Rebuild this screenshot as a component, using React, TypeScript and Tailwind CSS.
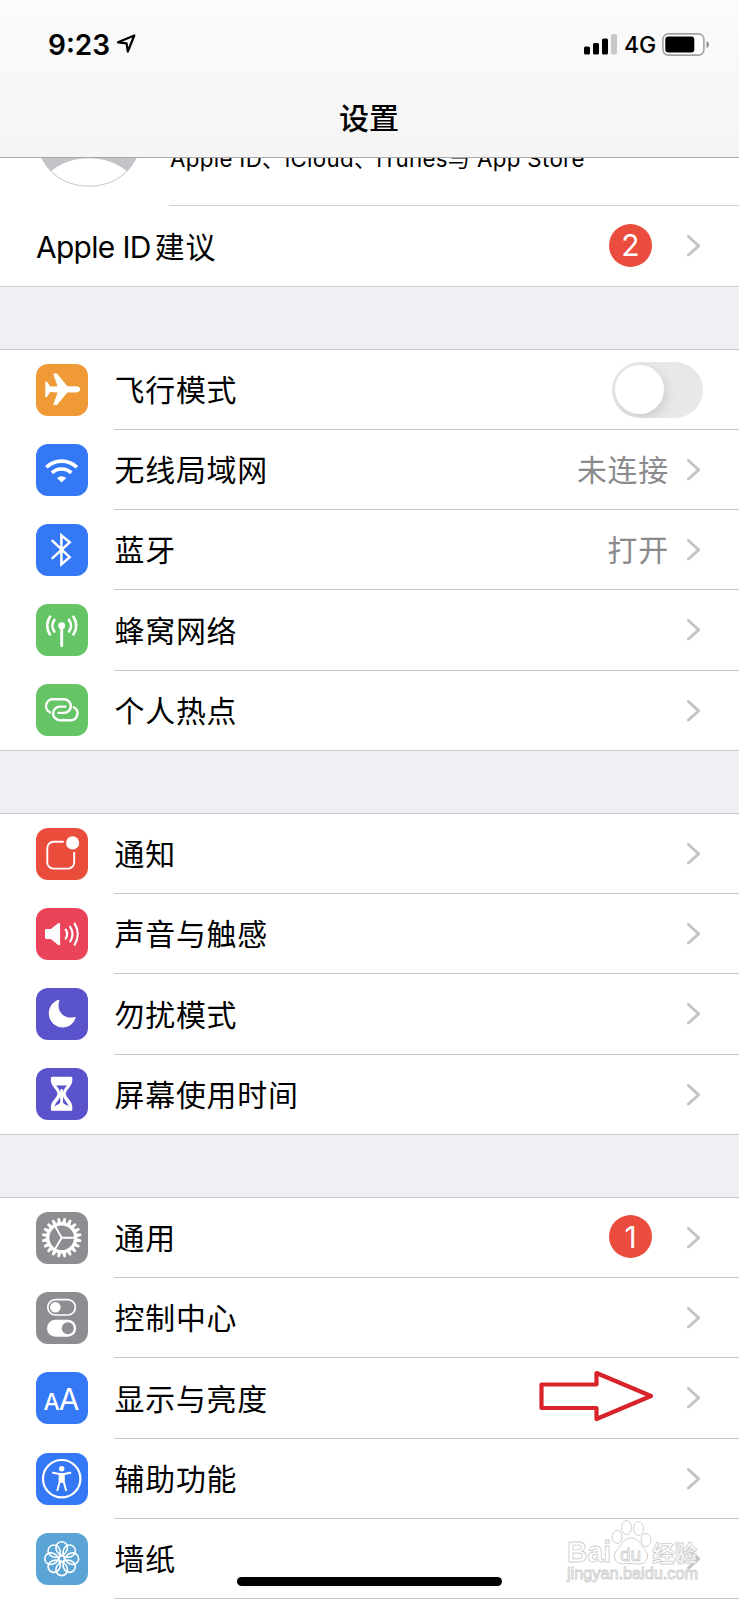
import type { ReactNode } from "react";

const svg = "h-[52px] w-[52px]";

function Glyph({ children }: { children: ReactNode }) {
  return (
    <svg viewBox="0 0 52 52" className={svg} fill="none" stroke="white" strokeLinecap="round" strokeLinejoin="round">
      {children}
    </svg>
  );
}

const Plane = () => (
  <Glyph>
    <path
      d="M44.300 25.300c0-1.900-2-3.100-4.600-3.100H31.300L21.600 10.300c-.5-.6-1-.8-1.700-.8h-1.600c-.7 0-1.100.5-.8 1.200L21.600 22.200l-7.400.4-3-4.600c-.3-.5-.6-.6-1-.6-.6 0-.9.3-.9.8v14.200c0 .5.300.8.9.8.4 0 .7-.1 1-.6l3-4.600 7.400.4-4.100 11.500c-.3.7.1 1.200.8 1.200h1.600c.7 0 1.200-.2 1.700-.8L31.300 28.400h8.400c2.600 0 4.600-1.200 4.600-3.100z"
      fill="white"
      stroke="none"
    />
  </Glyph>
);

const Wifi = () => (
  <Glyph>
    <g strokeWidth="3.600" strokeLinecap="butt">
      <path d="M10.300 23.300a22 22 0 0 1 30.600 0" />
      <path d="M15.900 28.900a14 14 0 0 1 19.400 0" />
    </g>
    <path d="M21 34a6.600 6.600 0 0 1 9.200 0l-4.600 4.500z" fill="white" stroke="none" />
  </Glyph>
);

const Bluetooth = () => (
  <Glyph>
    <path d="M16.500 16.800l17.200 16.400-8.300 7V11.400l8.300 7-17.200 15.800" strokeWidth="2.500" strokeLinejoin="miter" />
  </Glyph>
);

const Antenna = () => (
  <Glyph>
    <circle cx="25.700" cy="21.700" r="3.400" fill="white" stroke="none" />
    <path d="M25.700 22v19.800" strokeWidth="2.900" />
    <g strokeWidth="2.600">
      <path d="M18.400 15.900a9.500 9.500 0 0 0 0 11.600M33 15.900a9.500 9.500 0 0 1 0 11.600" />
      <path d="M14 12.700a15.500 15.500 0 0 0 0 17.800M37.400 12.700a15.500 15.500 0 0 1 0 17.800" />
    </g>
  </Glyph>
);

const Link = () => (
  <Glyph>
    <g strokeWidth="2.400">
      <path d="M14 28.400A6.900 6.900 0 0 1 17.600 15.300H28.100a6.800 6.800 0 0 1 0 13.600H22.600" />
      <path d="M37.800 23.200A6.900 6.900 0 0 1 34.300 36.200H23.900a6.800 6.800 0 0 1 0-13.600H29.400" />
    </g>
  </Glyph>
);

const Notify = () => (
  <Glyph>
    <path d="M27 13.800H17.500a6.200 6.200 0 0 0-6.200 6.200V34.400a6.200 6.200 0 0 0 6.200 6.200H32a6.200 6.200 0 0 0 6.200-6.200V24.800" strokeWidth="1.900" />
    <circle cx="36.600" cy="14.900" r="6.600" fill="white" stroke="none" />
  </Glyph>
);

const Sound = () => (
  <Glyph>
    <path d="M9 22.600c0-.9.600-1.500 1.500-1.500h4.300l7.400-5.800c1-.8 1.900-.3 1.900.7v20.200c0 1-.9 1.500-1.900.7l-7.400-6h-4.300c-.9 0-1.500-.6-1.500-1.500z" fill="white" stroke="none" />
    <g strokeWidth="2.200">
      <path d="M29.700 21.700a8 8 0 0 1 0 8.800M34.200 18.800a13.500 13.500 0 0 1 0 14.600M38.700 15.600a20 20 0 0 1 0 21" />
    </g>
  </Glyph>
);

const Moon = () => (
  <Glyph>
    <path d="M22.400 11.800c.8-.3 1.200.1.900.9-1.300 3.600-1.100 8.900 1.900 12.500 3.100 3.900 8.400 5.200 13.200 3.800 1.100-.3 1.600.2 1.200 1.100C37.500 35.900 32.700 39.500 27 39.500c-7.900 0-14.200-6.300-14.200-14.200 0-6 3.700-11.300 9.600-13.500z" fill="white" stroke="none" />
  </Glyph>
);

const Hourglass = () => (
  <Glyph>
    <path d="M16.300 9.400h18.600c.6 0 .9.400.8 1v2.200c0 6.500-6.600 8.200-6.600 13.200s6.600 6.700 6.600 13.200v2.200c.1.600-.2 1-.8 1H16.300c-.6 0-.9-.4-.8-1v-2.200c0-6.500 6.600-8.200 6.600-13.200s-6.600-6.700-6.600-13.200v-2.200c-.1-.6.200-1 .8-1z" fill="white" strokeWidth="1.200" />
    <path d="M20.300 17.600h10.600c-1.600 2.500-3.700 4-3.900 8v9.200c1 1.600 4.400 2 5.600 4.200-.6-5-5-6.600-5.600-11V22l-1.400-1.200L24.200 22v6c-.6 4.400-5 6-5.600 11 1.200-2.200 4.600-2.600 5.600-4.200v-9.200c-.2-4-2.300-5.500-3.900-8z" fill="#5a53cb" stroke="none" />
  </Glyph>
);

const teeth = Array.from({ length: 20 }, (_, i) => i * 18 + 9);

const Gear = () => (
  <Glyph>
    <circle cx="25.700" cy="25.700" r="13.900" strokeWidth="3.200" />
    <g stroke="none" fill="white">
      {teeth.map((a) => (
        <path key={a} d="M23.600 11.600l1-5.700h2.200l1 5.700z" transform={`rotate(${a} 25.700 25.700)`} />
      ))}
    </g>
    <path d="M25.700 25.700H39M25.700 25.700L18.800 13.800M25.700 25.700L18.800 37.600" strokeWidth="1.900" />
  </Glyph>
);

const Toggles = () => (
  <Glyph>
    <rect x="11.800" y="7.600" width="27.600" height="15.400" rx="7.700" strokeWidth="1.700" />
    <circle cx="19.400" cy="15.300" r="5.300" fill="white" stroke="none" />
    <rect x="11" y="27.800" width="29.200" height="17" rx="8.500" fill="white" stroke="none" />
    <circle cx="31.800" cy="36.300" r="6" fill="#8e8d92" stroke="none" />
  </Glyph>
);

const Letters = () => (
  <span className="flex items-baseline pt-px text-white">
    <span className="text-[23px] leading-none font-medium">A</span>
    <span className="-ml-px text-[30px] leading-none">A</span>
  </span>
);

const Person = () => (
  <Glyph>
    <circle cx="25.700" cy="25.700" r="18.700" strokeWidth="2.200" />
    <circle cx="25.700" cy="15.700" r="2.700" fill="white" stroke="none" />
    <path d="M17 19.800l6.400 1.100h4.600l6.400-1.100M23.800 21.500l-.2 7.500-2.200 8.200M27.600 21.500l.2 7.500 2.200 8.200" strokeWidth="2" />
    <path d="M23 20.800h5.400v8.400l-2.700.8-2.700-.8z" fill="white" stroke="none" />
  </Glyph>
);

const petals = [0, 45, 90, 135, 180, 225, 270, 315];

const Flower = () => (
  <Glyph>
    <g strokeWidth="1.600">
      {petals.map((a) => (
        <path
          key={a}
          d="M25.700 22.800C22 20.800 19.900 17.500 19.900 14.600a5.800 5.800 0 0 1 11.600 0c0 2.900-2.100 6.200-5.800 8.200z"
          transform={`rotate(${a} 25.700 25.700)`}
        />
      ))}
      <circle cx="25.700" cy="25.700" r="2.900" />
    </g>
  </Glyph>
);

const Chevron = () => (
  <svg viewBox="0 0 14 22" className="h-[22px] w-[14px] shrink-0" fill="none" stroke="#c4c4c6" strokeWidth="3" strokeLinecap="round" strokeLinejoin="round">
    <path d="M1.500 1.500L11.600 10.800 1.500 20" />
  </svg>
);

const Badge = ({ n }: { n: number }) => (
  <span className="mt-[-2px] mr-[35px] flex h-[43px] w-[43px] items-center justify-center rounded-full bg-[#ea4d3d] text-[30px] leading-none text-white">
    {n}
  </span>
);

const Switch = () => (
  <span className="-mr-[2px] flex h-[56px] w-[91px] items-center overflow-hidden rounded-full bg-[#e8e8e8] pl-[3px]">
    <span className="h-[49px] w-[49px] rounded-full bg-white shadow-[2px_4px_12px_rgba(0,0,0,0.12)]" />
  </span>
);

type Item = { label: string; bg: string; icon: ReactNode; h?: string; right?: ReactNode; value?: string; toggle?: boolean; last?: boolean };

function Row({ label, bg, icon, h = "h-[80px]", right, value, toggle, last }: Item) {
  return (
    <div className={`flex ${h} ${last ? "border-b border-[#c8c8cb]" : ""}`}>
      <div className="flex w-[114px] shrink-0 items-center pb-px pl-[35.500px]">
        <span className={`flex h-[52px] w-[52px] items-center justify-center overflow-hidden rounded-[12px] ${bg}`}>{icon}</span>
      </div>
      <div className={`flex flex-1 items-center pr-[38px] ${last ? "" : "border-b border-[#c8c8cb]"}`}>
        <span className="flex-1 pt-[3px] pl-[0.500px] leading-none tracking-[0.8px]">{label}</span>
        {value && <span className="mr-[18px] pt-[3px] leading-none tracking-[0.8px] text-[#8a8a8d]">{value}</span>}
        {right}
        {!toggle && <Chevron />}
      </div>
    </div>
  );
}

function Group({ items }: { items: Item[] }) {
  return (
    <section className="border-t border-[#c8c8cb] bg-white">
      {items.map((it) => (
        <Row key={it.label} {...it} />
      ))}
    </section>
  );
}

const network: Item[] = [
  { label: "飞行模式", bg: "bg-[#f09a37]", icon: <Plane />, right: <Switch />, toggle: true },
  { label: "无线局域网", bg: "bg-[#3478f6]", icon: <Wifi />, value: "未连接" },
  { label: "蓝牙", bg: "bg-[#3478f6]", icon: <Bluetooth />, value: "打开" },
  { label: "蜂窝网络", bg: "bg-[#65c466]", icon: <Antenna />, h: "h-[81px]" },
  { label: "个人热点", bg: "bg-[#65c466]", icon: <Link />, last: true },
];

const alerts: Item[] = [
  { label: "通知", bg: "bg-[#eb4d3d]", icon: <Notify /> },
  { label: "声音与触感", bg: "bg-[#ea445a]", icon: <Sound /> },
  { label: "勿扰模式", bg: "bg-[#5a53cb]", icon: <Moon />, h: "h-[81px]" },
  { label: "屏幕使用时间", bg: "bg-[#5a53cb]", icon: <Hourglass />, last: true },
];

const device: Item[] = [
  { label: "通用", bg: "bg-[#8e8d92]", icon: <Gear />, right: <Badge n={1} /> },
  { label: "控制中心", bg: "bg-[#8e8d92]", icon: <Toggles /> },
  { label: "显示与亮度", bg: "bg-[#3478f6]", icon: <Letters />, h: "h-[81px]" },
  { label: "辅助功能", bg: "bg-[#3478f6]", icon: <Person /> },
  { label: "墙纸", bg: "bg-[#5aa5d5]", icon: <Flower /> },
];

function Header() {
  return (
    <header className="h-[158px] border-b border-[#a9a9ab] bg-linear-to-b from-[#fbfbfd] to-[#f5f5f5]">
      <div className="flex h-[88px] items-center pr-[30px] pl-[48px]">
        <span className="pt-px text-[28px] leading-none font-semibold">9:23</span>
        <svg viewBox="0 0 20 20" className="ml-[6px] h-[20px] w-[20px]" fill="none" stroke="black" strokeWidth="2.200" strokeLinejoin="round">
          <path d="M18.300 1.500L11.800 17.500 10.600 9.400 2 8.300z" />
        </svg>
        <span className="flex-1" />
        <svg viewBox="0 0 33 21" className="h-[21px] w-[33px]">
          <rect x="0" y="12.500" width="6" height="8" rx="1.500" />
          <rect x="9" y="9" width="6" height="11.500" rx="1.500" />
          <rect x="18" y="4.500" width="6" height="16" rx="1.500" />
          <rect x="27" y="0" width="6" height="20.500" rx="1.500" fill="#c8c8ca" />
        </svg>
        <span className="ml-[7px] w-[32px] pt-[2px] text-[23px] leading-none font-medium whitespace-nowrap">4G</span>
        <svg viewBox="0 0 47 23" className="ml-[6px] h-[23px] w-[47px]">
          <rect x=".9" y=".9" width="41" height="21.200" rx="5.500" fill="white" stroke="#a2a2a4" strokeWidth="1.600" />
          <rect x="3.300" y="3.500" width="29" height="16" rx="3" />
          <path d="M44.500 8v7c1.700-.7 2.500-2 2.500-3.500s-.8-2.800-2.500-3.500z" fill="#8f8f91" />
        </svg>
      </div>
      <h1 className="pt-[15px] text-center text-[30px] leading-none font-medium -indent-[1px]">设置</h1>
    </header>
  );
}

function Account() {
  return (
    <section className="border-b border-[#d0d0d4] bg-white">
      <div className="flex h-[48px] overflow-hidden">
        <div className="w-[169px] pl-[40px]">
          <svg viewBox="0 0 98 30" className="h-[30px] w-[98px]">
            <path d="M1.500 0C10 18 27 28.500 49 28.500S88 18 96.500 0z" fill="#c3c3c8" />
            <path d="M11.500 13C31-4 67-4 86.500 13C77 23 64 27.600 49 27.600S21 23 11.500 13z" fill="white" />
          </svg>
        </div>
        <div className="flex-1 border-b border-[#cfcfd2]">
          <p className="-mt-[13px] pl-px text-[22.300px] leading-[27px] tracking-[0.33px] whitespace-nowrap">Apple ID、iCloud、iTunes与 App Store</p>
        </div>
      </div>
      <div className="flex h-[80px] items-center pr-[38px] pl-[36px]">
        <span className="flex-1 pt-[4px] leading-none">
          <span className="tracking-[-0.65px]">Apple ID</span>
          <span className="ml-[4px] tracking-[0.8px]">建议</span>
        </span>
        <Badge n={2} />
        <Chevron />
      </div>
    </section>
  );
}

function Watermark() {
  return (
    <div className="absolute top-[1518px] left-[566px] w-[135px] font-['Liberation_Sans','Noto_Sans_CJK_SC',sans-serif] text-white">
      <svg viewBox="0 0 135 66" className="h-[66px] w-[135px] overflow-visible" fill="white" stroke="#d0d0d0" strokeWidth="1">
        <ellipse cx="51" cy="19" rx="5" ry="6.500" />
        <ellipse cx="60.500" cy="9.500" rx="5" ry="7" />
        <ellipse cx="72.500" cy="10.500" rx="5" ry="7" />
        <ellipse cx="80" cy="22" rx="5" ry="6.500" />
        <path d="M65 20c8 0 10 8 14 12s4 13-5 14c-5 0-13-1-18 0-9-1-9-10-5-14s6-12 14-12z" />
        <g strokeWidth=".9" fontWeight="700">
          <text x="1" y="44" fontSize="30" textLength="44" lengthAdjust="spacingAndGlyphs">Bai</text>
          <text x="54" y="43" fontSize="19" fontWeight="400">du</text>
          <text x="86" y="44" fontSize="22.500">经验</text>
          <text x="1" y="61" fontSize="16" fontWeight="400" strokeWidth=".9" textLength="131" lengthAdjust="spacingAndGlyphs">jingyan.baidu.com</text>
        </g>
      </svg>
    </div>
  );
}

export default function App() {
  return (
    <main className="relative h-[1600px] w-[739px] overflow-hidden bg-white font-['Inter','Noto_Sans_CJK_SC',sans-serif] text-[29.900px] text-black">
      <Header />
      <Account />
      <div className="h-[62px] bg-[#efeff4]" />
      <Group items={network} />
      <div className="h-[62px] bg-[#efeff4]" />
      <Group items={alerts} />
      <div className="h-[62px] bg-[#efeff4]" />
      <Group items={device} />
      <svg viewBox="0 0 116 52" className="absolute top-[1370px] left-[538px] h-[52px] w-[116px]" fill="none" stroke="#d9232b" strokeWidth="4.200" strokeLinejoin="round">
        <path d="M3.500 14.500H58.500V3L113 26 58.500 49V38H3.500z" />
      </svg>
      <Watermark />
      <div className="absolute top-[1577px] left-[237px] h-[9px] w-[265px] rounded-full bg-black" />
    </main>
  );
}
